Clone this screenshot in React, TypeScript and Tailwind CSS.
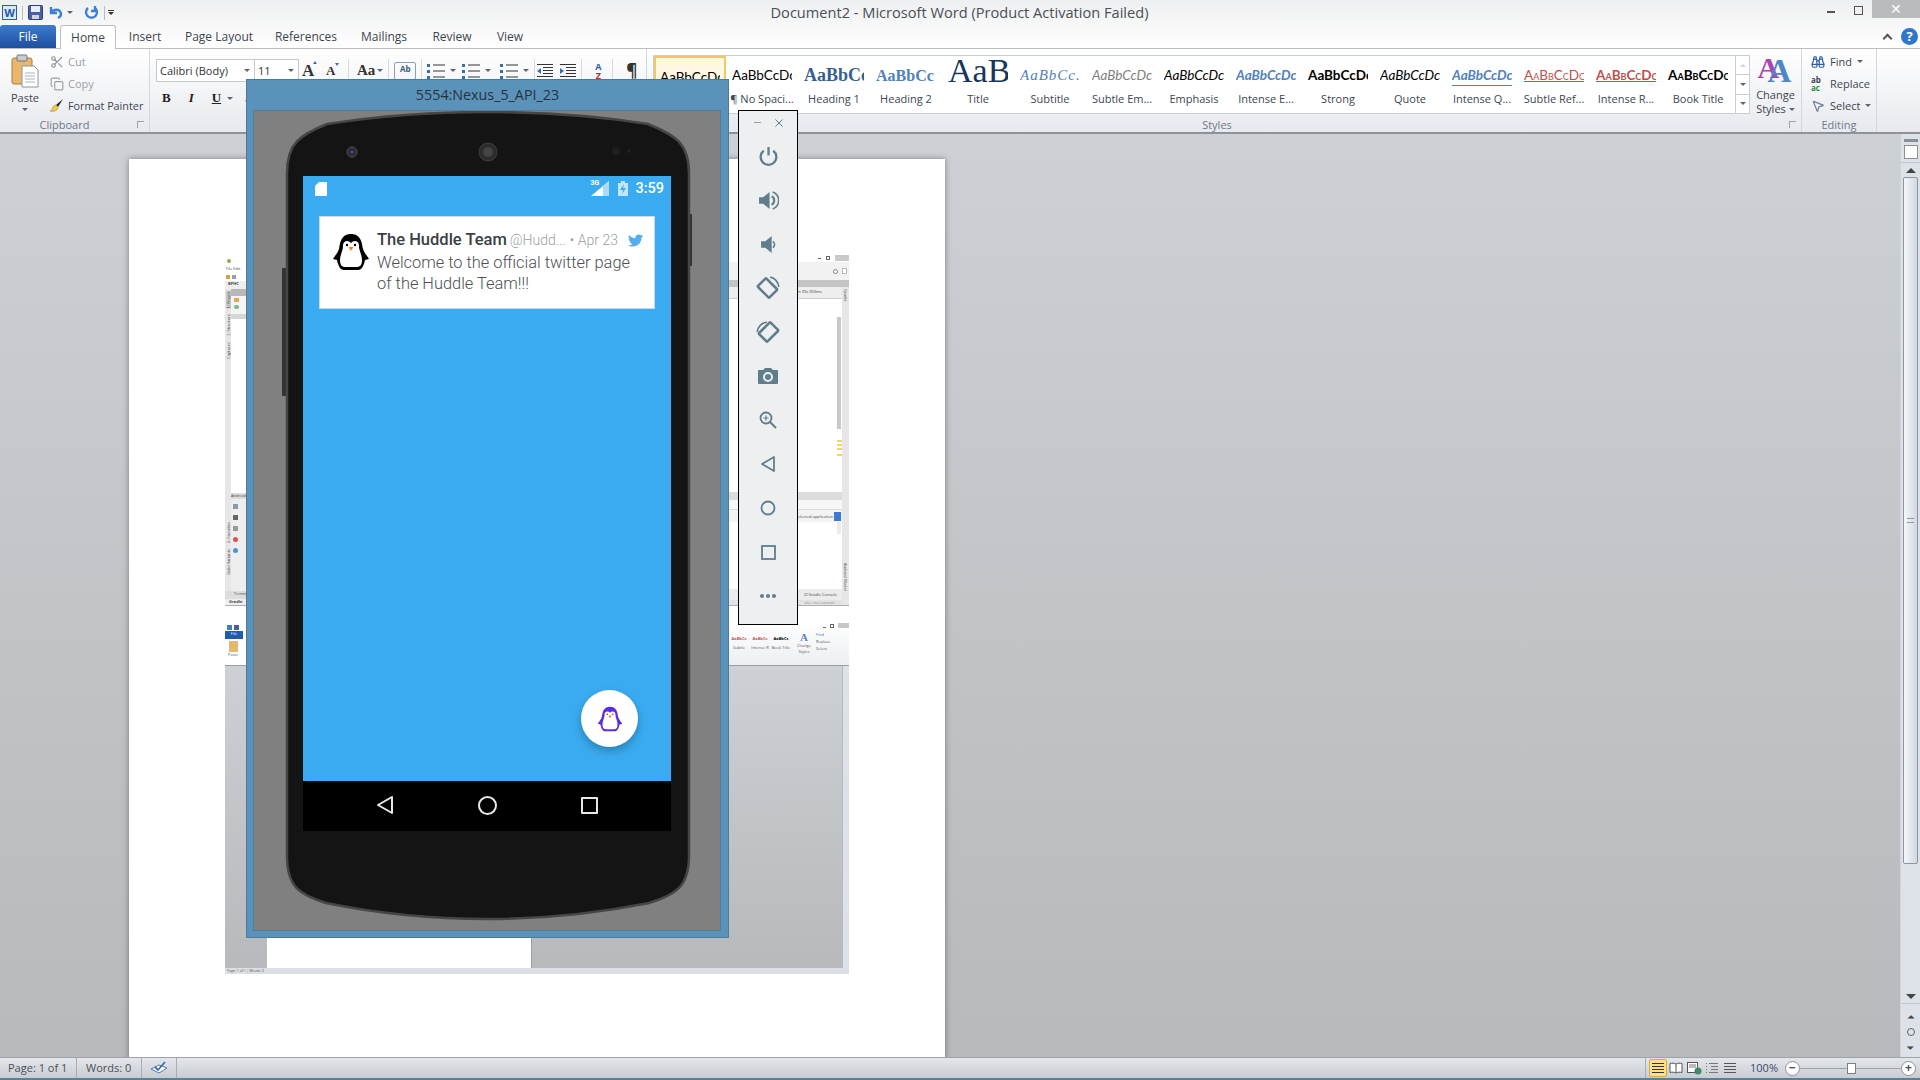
import { Binoculars, Copy, MousePointer2, Scissors } from "lucide-react";
import { FaTwitter } from "react-icons/fa";

const calibri = "font-['Lato',sans-serif]";
const cambria = "font-['Liberation_Serif',serif]";

const tabs = [
  { label: "Insert", width: "w-[58px]" },
  { label: "Page Layout", width: "w-[90px]" },
  { label: "References", width: "w-[84px]" },
  { label: "Mailings", width: "w-[72px]" },
  { label: "Review", width: "w-[64px]" },
  { label: "View", width: "w-[52px]" },
];

const styleItems = [
  { label: "Normal", preview: "AaBbCcDc", cls: `${calibri} text-[13.500px] text-black` },
  { label: "¶ No Spaci...", preview: "AaBbCcDc", cls: `${calibri} text-[13.500px] text-black` },
  { label: "Heading 1", preview: "AaBbCc", cls: `${cambria} text-[18px] font-bold text-[#365f91]` },
  { label: "Heading 2", preview: "AaBbCc", cls: `${cambria} text-[16px] font-bold text-[#4f81bd]` },
  { label: "Title", preview: "AaB", cls: `${cambria} text-[34px] leading-[30px] text-[#17365d] relative -top-[5px]` },
  { label: "Subtitle", preview: "AaBbCc.", cls: `${cambria} text-[15px] italic tracking-[1px] text-[#4f81bd]` },
  { label: "Subtle Em...", preview: "AaBbCcDc", cls: `${calibri} text-[13.500px] italic text-[#808080]` },
  { label: "Emphasis", preview: "AaBbCcDc", cls: `${calibri} text-[13.500px] italic text-black` },
  { label: "Intense E...", preview: "AaBbCcDc", cls: `${calibri} text-[13.500px] italic font-bold text-[#4f81bd]` },
  { label: "Strong", preview: "AaBbCcDc", cls: `${calibri} text-[13.500px] font-bold text-black` },
  { label: "Quote", preview: "AaBbCcDc", cls: `${calibri} text-[13.500px] italic text-black` },
  { label: "Intense Q...", preview: "AaBbCcDc", cls: `${calibri} text-[13.500px] italic font-bold text-[#4f81bd] border-b border-[#4f81bd]` },
  { label: "Subtle Ref...", preview: "AaBbCcDc", cls: `${calibri} text-[13.500px] [font-variant:small-caps] text-[#c0504d] underline` },
  { label: "Intense R...", preview: "AaBbCcDc", cls: `${calibri} text-[13.500px] [font-variant:small-caps] font-bold text-[#c0504d] underline` },
  { label: "Book Title", preview: "AaBbCcDc", cls: `${calibri} text-[13.500px] [font-variant:small-caps] font-bold text-black` },
];

function Caret({ className = "" }: { className?: string }) {
  return <span className={`inline-block w-0 h-0 border-x-[3px] border-x-transparent border-t-[3px] border-t-[#5c6670] ${className}`} />;
}

function Lines({ dots = false }: { dots?: boolean }) {
  return (
    <svg width="18" height="16" viewBox="0 0 18 16">
      {[2, 8, 14].map((y) => (
        <g key={y}>
          {dots && <rect x="0" y={y - 1} width="3" height="3" fill="#3b6ea8" />}
          <rect x="6" y={y - 0.5} width="12" height="1" fill="#333" />
        </g>
      ))}
    </svg>
  );
}

function Indent({ flip = false }: { flip?: boolean }) {
  return (
    <svg width="16" height="16" viewBox="0 0 16 16">
      {[1, 4, 7, 10, 13].map((y) => (
        <rect key={y} x={y > 2 && y < 12 ? 6 : 0} y={y} width={y > 2 && y < 12 ? 10 : 16} height="1" fill="#333" />
      ))}
      <path d={flip ? "M0 5 L4 8 L0 11 Z" : "M4 5 L0 8 L4 11 Z"} fill="#2f6fc0" />
    </svg>
  );
}

function Sep() {
  return <span className="w-px h-[24px] bg-[#d5d9de]" />;
}

function RibbonGroup({
  label,
  width,
  children,
  launcher = true,
  labelClass = "",
}: {
  label: string;
  width: string;
  children: React.ReactNode;
  launcher?: boolean;
  labelClass?: string;
}) {
  return (
    <div className={`${width} h-full flex flex-col border-r border-[#d3d7dc] relative`}>
      <div className="flex-1 min-h-0">{children}</div>
      <div className={`h-[15px] text-center text-[11px] leading-[15px] text-[#6d7a88] ${labelClass}`}>{label}</div>
      {launcher && <span className="absolute right-[5px] bottom-[4px] w-[7px] h-[7px] border-l border-t border-[#9aa2aa]" />}
    </div>
  );
}

function ClipboardGroup() {
  return (
    <RibbonGroup label="Clipboard" width="w-[150px]" labelClass="pr-[20px]">
      <div className="flex h-full">
        <div className="w-[50px] flex flex-col items-center pt-[5px] text-[11px] text-[#3c4650]">
          <svg width="28" height="34" viewBox="0 0 28 34">
            <rect x="1" y="4" width="20" height="26" rx="2" fill="#e8b76c" stroke="#a97f3f" />
            <rect x="6" y="1" width="10" height="6" rx="1" fill="#c8ccd0" stroke="#777" />
            <path d="M11 12h12l4 4v17H11z" fill="#fff" stroke="#8b95a0" />
            <path d="M14 19h10M14 22h10M14 25h10M14 28h10" stroke="#a8b3c0" />
          </svg>
          <span className="leading-[14px] mt-[3px]">Paste</span>
          <Caret className="mt-[3px]" />
        </div>
        <div className="flex flex-col pt-[4px] gap-[5px] text-[11px] leading-[17px]">
          <div className="flex items-center gap-[4px] text-[#9aa0a6]">
            <Scissors size={14} className="text-[#8d9298]" />
            <span>Cut</span>
          </div>
          <div className="flex items-center gap-[4px] text-[#9aa0a6]">
            <Copy size={14} className="text-[#9aa0a6]" />
            <span>Copy</span>
          </div>
          <div className="flex items-center gap-[4px] text-[#3c4650] -ml-[1px]">
            <svg width="15" height="15" viewBox="0 0 15 15">
              <path d="M14 1L7 7l2 2z" fill="#222" />
              <path d="M1 13c3 0 2-6 6-6l2 2c0 4-5 5-8 4z" fill="#f0c94a" stroke="#a88820" strokeWidth="0.6" />
            </svg>
            <span className="text-[10.800px]">Format Painter</span>
          </div>
        </div>
      </div>
    </RibbonGroup>
  );
}

function FontParagraphGroup() {
  return (
    <div className="w-[497px] h-full border-r border-[#d3d7dc] relative">
      <div className="flex items-center h-[23px] mt-[10px] pl-[6px] gap-[5px] text-[#333]">
        <div className="flex h-[23px] border border-[#c5cad0] bg-white text-[11px] leading-[21px] -mr-[2px]">
          <div className="w-[98px] pl-[3px] border-r border-[#c5cad0] flex items-center justify-between pr-[4px]">
            <span>Calibri (Body)</span>
            <Caret />
          </div>
          <div className="w-[43px] pl-[3px] flex items-center justify-between pr-[4px]">
            <span>11</span>
            <Caret />
          </div>
        </div>
        <span className={`${cambria} text-[17px] font-bold w-[18px] relative`}>
          A
          <span className="absolute left-[11px] top-[3px] w-0 h-0 border-x-[2px] border-x-transparent border-b-[3px] border-b-[#3a6ea8]" />
        </span>
        <span className={`${cambria} text-[13px] font-bold w-[17px] ml-[1px] relative`}>
          A
          <span className="absolute left-[9px] top-[2px] w-0 h-0 border-x-[2px] border-x-transparent border-t-[3px] border-t-[#3a6ea8]" />
        </span>
        <Sep />
        <span className={`${cambria} text-[15px] font-bold ml-[3px]`}>Aa</span>
        <Caret className="-ml-[3px]" />
        <Sep />
        <span className="w-[22px] h-[18px] text-[8px] leading-[12px] font-bold text-[#3a5c84] border border-[#8aa0b8] rounded-[2px] text-center">Ab</span>
        <Sep />
        <span><Lines dots /></span>
        <Caret />
        <span className="ml-[1px]"><Lines dots /></span>
        <Caret />
        <span className="ml-[4px]"><Lines dots /></span>
        <Caret />
        <Sep />
        <span className="-ml-[3px]"><Indent /></span>
        <span className="ml-[2px]"><Indent flip /></span>
        <Sep />
        <span className="w-[18px] ml-[2px] text-center text-[9px] font-bold leading-[9px] text-[#2f5fa8]">A<br /><span className="text-[#a83232]">Z</span></span>
        <Sep />
        <span className="ml-[8px] text-[17px] font-bold">¶</span>
      </div>
      <div className="flex items-center h-[20px] mt-[6px] pl-[12px] gap-[18px] text-[13px] font-bold text-[#222]">
        <span className={cambria}>B</span>
        <span className={`${cambria} italic`}>I</span>
        <span className={`${cambria} underline`}>U</span>
        <Caret className="-ml-[12px]" />
        <span className={`${cambria} text-[11px] font-normal -ml-[6px]`}>a</span>
      </div>
    </div>
  );
}

function StylesGroup() {
  return (
    <div className="w-[1155px] h-full flex border-r border-[#d3d7dc] relative">
      <div className="w-[1103px] pl-[6px] pt-[6px]">
        <div className="flex h-[59px] border border-[#c9ced4] bg-white w-[1097px]">
          <div className="flex-1 flex">
            {styleItems.map((s, i) => (
              <div key={s.label} className={`w-[72px] flex flex-col items-center ${i === 0 ? "border-2 border-[#f2c867] bg-[#fff8e0]" : ""}`}>
                <div className="h-[37px] mt-[1px] w-[60px] overflow-hidden flex items-center justify-start whitespace-nowrap">
                  <span className={s.cls}>{s.preview}</span>
                </div>
                <div className="text-[11px] leading-[15px] -mt-[3px] text-[#3c4650] whitespace-nowrap">{s.label}</div>
              </div>
            ))}
          </div>
          <div className="w-[14px] flex flex-col border-l border-[#c9ced4] text-[#555]">
            {[0, 1, 2].map((i) => (
              <div key={i} className="flex-1 flex items-center justify-center border-b border-[#c9ced4] last:border-b-0">
                <Caret className={i === 0 ? "rotate-180 opacity-30" : ""} />
              </div>
            ))}
          </div>
        </div>
      </div>
      <div className="w-[52px] flex flex-col items-center pt-[2px] text-[11px] leading-[14px] text-[#3c4650]">
        <div className={`${cambria} relative w-[36px] h-[37px] font-bold`}>
          <span className="absolute left-0 top-0 text-[30px] leading-[34px] text-[#a847b0]">A</span>
          <span className="absolute left-[10px] top-[3px] text-[33px] leading-[34px] text-[#4f86c8]">A</span>
        </div>
        <span>Change</span>
        <span className="flex items-center gap-[3px]">Styles <Caret /></span>
      </div>
      <div className="absolute left-0 right-0 bottom-0 h-[15px] text-center text-[11px] leading-[15px] text-[#6d7a88] pr-[14px]">Styles</div>
      <span className="absolute right-[5px] bottom-[4px] w-[7px] h-[7px] border-l border-t border-[#9aa2aa]" />
    </div>
  );
}

function EditingGroup() {
  return (
    <RibbonGroup label="Editing" width="w-[75px]" launcher={false}>
      <div className="flex flex-col pl-[9px] pt-[4px] gap-[5px] text-[11px] leading-[17px] text-[#3c4650]">
        <div className="flex items-center gap-[5px]">
          <Binoculars size={14} className="text-[#2f5f9e]" />
          <span>Find</span>
          <Caret />
        </div>
        <div className="flex items-center gap-[4px]">
          <span className="text-[8px] leading-[8px] w-[15px] font-bold">ab<br /><span className="text-[#2f8a3c]">ac</span></span>
          <span>Replace</span>
        </div>
        <div className="flex items-center gap-[5px]">
          <MousePointer2 size={14} className="text-[#6c7f96]" />
          <span>Select</span>
          <Caret />
        </div>
      </div>
    </RibbonGroup>
  );
}

function WordHeader() {
  return (
    <>
      <div className="h-[25px] relative flex items-center">
        <div className="flex items-center pl-[2px] gap-[5px] w-[130px]">
          <span className="w-[15px] h-[15px] border border-[#2c5ea8] bg-[#dbe8f7] text-[11px] font-bold leading-[13px] text-center text-[#1f58a8]">W</span>
          <span className="w-px h-[14px] bg-[#b8bcc0]" />
          <svg width="15" height="15" viewBox="0 0 15 15">
            <rect x="0.5" y="0.5" width="14" height="14" rx="1" fill="#4a5fa5" stroke="#2f3f78" />
            <rect x="3" y="1" width="9" height="6" fill="#e8eef8" />
            <rect x="4" y="10" width="7" height="4" fill="#d0d4dc" />
          </svg>
          <svg width="16" height="15" viewBox="0 0 16 15">
            <path d="M3 2v6h6M3 8c2-4 9-5 10 1 0 2-1 3-3 4" fill="none" stroke="#3f7fcf" strokeWidth="2.4" />
          </svg>
          <Caret className="-ml-[2px]" />
          <svg className="ml-[6px]" width="15" height="15" viewBox="0 0 15 15">
            <path d="M4 3a5.500 5.500 0 1 0 7 0M11 1v5h-4" fill="none" stroke="#3f7fcf" strokeWidth="2.4" />
          </svg>
          <span className="w-px h-[14px] bg-[#b8bcc0]" />
          <span className="flex flex-col items-center gap-[1px] -ml-[2px]">
            <span className="w-[6px] h-px bg-[#333]" />
            <Caret className="border-t-[#333]" />
          </span>
        </div>
        <div className="flex-1 text-center text-[14.600px] text-[#4a4f55] pr-[38px]">Document2 - Microsoft Word (Product Activation Failed)</div>
        <div className="flex items-start h-[25px] self-start">
          <span className="w-[8px] h-[2px] bg-[#555] mt-[11px] mr-[19px]" />
          <span className="w-[9px] h-[9px] border border-[#555] mt-[6px] mr-[9px]" />
          <span className="w-[48px] h-[18px] bg-[#b9bcbf] text-white text-[14px] leading-[18px] text-center">✕</span>
        </div>
      </div>
      <div className="h-[23px] flex items-end relative text-[12px] text-[#3c4650]">
        <div className="w-[56px] h-[23px] ml-0 rounded-t-[3px] bg-gradient-to-b from-[#3f7bcf] to-[#1c4f9f] text-white text-center leading-[23px]">File</div>
        <div className="w-[56px] h-[24px] ml-[4px] -mb-px z-10 rounded-t-[3px] border border-b-0 border-[#b9bec4] bg-white text-center leading-[23px]">Home</div>
        {tabs.map((t) => (
          <div key={t.label} className={`${t.width} h-[23px] leading-[23px] text-center`}>{t.label}</div>
        ))}
        <div className="flex-1 flex justify-end items-center gap-[10px] pr-[2px] self-start h-[23px]">
          <span className="w-[7px] h-[7px] border-l-2 border-t-2 border-[#555] rotate-45 mt-[3px]" />
          <span className="w-[17px] h-[17px] rounded-full bg-[#2f76cf] text-white text-[13px] font-bold leading-[17px] text-center">?</span>
        </div>
      </div>
    </>
  );
}

function IdeLeftStrip() {
  return (
    <div className="w-[21px] h-full flex flex-col text-[4px] leading-[5px] text-[#444] overflow-hidden">
      <div className="h-[11px] flex items-center pl-[2px]"><span className="w-[4px] h-[4px] rounded-full bg-[#7fb53c]" /></div>
      <div className="h-[6px] pl-[1px] whitespace-nowrap">File Edit</div>
      <div className="h-[9px] flex items-center gap-[2px] pl-[1px]">
        <span className="w-[4px] h-[4px] bg-[#d9a24a]" />
        <span className="w-[4px] h-[4px] bg-[#9aa0a6]" />
      </div>
      <div className="h-[8px] pl-[3px] bg-[#eeeeee] font-bold">BPHC</div>
      <div className="flex-1 flex min-h-0">
        <div className="w-[7px] bg-[#e6e6e6] flex flex-col items-center pt-[2px] gap-[6px]">
          <span className="[writing-mode:vertical-rl] rotate-180 bg-[#c8c8c8]">1: Project</span>
          <span className="[writing-mode:vertical-rl] rotate-180">Z: Structure</span>
          <span className="[writing-mode:vertical-rl] rotate-180">Captures</span>
          <span className="flex-1" />
          <span className="[writing-mode:vertical-rl] rotate-180">2: Favorites</span>
          <span className="[writing-mode:vertical-rl] rotate-180 mb-[16px]">Build Variants</span>
        </div>
        <div className="flex-1 flex flex-col">
          <div className="h-[7px] bg-[#b8b8b8]" />
          <div className="h-[18px] bg-[#f4f4f4] flex flex-col gap-[3px] pt-[2px] pl-[3px]">
            <span className="w-[5px] h-[4px] bg-[#e0a85a]" />
            <span className="w-[5px] h-[4px] rounded-full bg-[#6fbf8c]" />
          </div>
          <div className="h-[5px] bg-[#d6d6d6]" />
          <div className="h-[174px] bg-white" />
          <div className="h-[6px] bg-[#dcdcdc] whitespace-nowrap">Android</div>
          <div className="flex-1 bg-[#eeeeee] flex flex-col gap-[6px] pt-[5px] pl-[2px]">
            <span className="w-[5px] h-[5px] bg-[#8a9aaa]" />
            <span className="w-[5px] h-[5px] bg-[#666]" />
            <span className="w-[5px] h-[5px] bg-[#9a9a9a]" />
            <span className="w-[5px] h-[5px] rounded-full bg-[#d9534f]" />
            <span className="w-[5px] h-[5px] rounded-full bg-[#4f90d9]" />
          </div>
        </div>
      </div>
      <div className="h-[8px] bg-[#dddddd] pl-[9px]">Terminal</div>
      <div className="h-[6px] bg-[#eeeeee] font-bold pl-[4px]">Gradle</div>
    </div>
  );
}

function IdeRightStrip() {
  return (
    <div className="w-[120px] h-full flex flex-col text-[4px] leading-[5px] text-[#444] overflow-hidden">
      <div className="h-[7px] flex justify-end items-start bg-white gap-[5px]">
        <span className="w-[3px] h-[1px] bg-[#666] mt-[3px]" />
        <span className="w-[4px] h-[4px] border border-[#666] mt-[1px]" />
        <span className="w-[14px] h-[6px] bg-[#c9c9c9]" />
      </div>
      <div className="h-[18px] bg-[#f2f2f2] flex justify-end items-center gap-[4px] pr-[2px]">
        <span className="w-[5px] h-[5px] rounded-full border border-[#888]" />
        <span className="w-[5px] h-[6px] border border-[#bbb] bg-white" />
      </div>
      <div className="h-[7px] bg-[#c4c4c4]" />
      <div className="flex-1 flex min-h-0">
        <div className="flex-1 flex flex-col min-w-0">
          <div className="h-[12px] bg-[#eeeeee] pl-[68px] leading-[10px] border-b border-[#cfcfcf] whitespace-nowrap">m 39s 953ms</div>
          <div className="h-[193px] bg-white relative flex justify-end pr-[1px]">
            <div className="w-[4px] h-[112px] mt-[18px] bg-[#c8c8c8]" />
            <div className="absolute right-0 top-[141px] w-[5px] h-[2px] bg-[#f1d66a] shadow-[0_4px_0_#f1d66a,0_8px_0_#f1d66a,0_14px_0_#f1d66a]" />
          </div>
          <div className="h-[8px] bg-[#dcdcdc]" />
          <div className="h-[10px] bg-[#f7f7f7] border-b border-[#dddddd]" />
          <div className="h-[12px] bg-[#f3f3f3] flex items-center justify-end gap-[1px] pr-[1px] whitespace-nowrap">
            <span>selected application</span>
            <span className="w-[7px] h-[9px] bg-[#3f77d6]" />
          </div>
          <div className="flex-1 bg-white flex justify-end pr-[1px]">
            <div className="w-[4px] h-[12px] bg-[#ececec]" />
          </div>
          <div className="h-[11px] bg-[#ececec] text-right pr-[5px] leading-[11px] whitespace-nowrap">☑ Gradle Console</div>
          <div className="h-[5px] bg-[#e2e2e2] text-[#888] text-right pr-[6px] whitespace-nowrap">n/a &lt;no context&gt;</div>
        </div>
        <div className="w-[7px] bg-[#e6e6e6] flex flex-col items-center pt-[2px] justify-between pb-[14px]">
          <span className="[writing-mode:vertical-rl]">Gradle</span>
          <span className="[writing-mode:vertical-rl]">Android Model</span>
        </div>
      </div>
    </div>
  );
}

function MiniRibbonRight() {
  return (
    <div className="w-[120px] h-full bg-gradient-to-b from-white to-[#eceef1] text-[4px] leading-[6px] text-[#555] flex flex-col">
      <div className="h-[9px] flex justify-end items-start gap-[4px]">
        <span className="w-[3px] h-px bg-[#666] mt-[4px]" />
        <span className="w-[4px] h-[4px] border border-[#666] mt-[1px]" />
        <span className="w-[11px] h-[5px] bg-[#c4c6c9]" />
      </div>
      <div className="flex-1 flex">
        <div className="w-[62px] flex gap-[1px] pt-[4px] font-bold">
          {["text-[#c0504d]", "text-[#c0504d]", "text-black"].map((c, i) => (
            <div key={i} className="flex-1 overflow-hidden text-center whitespace-nowrap">
              <div className={c}>AaBbCc</div>
              <div className="font-normal text-[#555] mt-[3px]">{["Subtle", "Intense R", "Book Title"][i]}</div>
            </div>
          ))}
        </div>
        <div className="w-[20px] flex flex-col items-center pl-[6px]">
          <span className={`${cambria} text-[11px] leading-[11px] font-bold text-[#5a80c8]`}>A</span>
          <span>Change</span>
          <span>Styles</span>
        </div>
        <div className="flex-1 pl-[5px] flex flex-col gap-[1px]">
          <span className="text-[#3f6fae]">Find</span>
          <span>Replace</span>
          <span>Select</span>
        </div>
      </div>
    </div>
  );
}

function MiniWordShot() {
  return (
    <div className="w-[624px] h-[351px] flex flex-col mt-[17px]">
      <div className="h-[43px] flex justify-between bg-white border-b border-[#9a9ea2]">
        <div className="w-[21px] text-[4px] leading-[5px] text-[#555]">
          <div className="h-[8px] flex items-center gap-[2px] pl-[2px]">
            <span className="w-[5px] h-[5px] bg-[#3f7fcf]" />
            <span className="w-[5px] h-[5px] bg-[#4a5fa5]" />
          </div>
          <div className="h-[8px] w-[18px] bg-[#1f5bb3] text-white text-center">File</div>
          <span className="block w-[9px] h-[11px] bg-[#e8b76c] mx-[4px] mt-[2px]" />
          <div className="pl-[3px]">Paste</div>
        </div>
        <MiniRibbonRight />
      </div>
      <div className="flex-1 flex bg-gradient-to-b from-[#cdd0d4] to-[#b7b9bc] min-h-0">
        <div className="ml-[42px] w-[265px] bg-white border-r border-[#9c9ea0]" />
        <div className="flex-1" />
        <div className="w-[7px] bg-[#dde1e8] border-l border-[#b5b9c0]" />
      </div>
      <div className="h-[6px] bg-[#dcdfe3] text-[3.5px] leading-[6px] text-[#555] pl-[2px] whitespace-nowrap">Page: 1 of 1 | Words: 0</div>
    </div>
  );
}

function Document() {
  return (
    <div className="flex-1 flex pl-[129px] pt-[25px] min-h-0 bg-gradient-to-b from-[#cdd0d4] to-[#b7b9bc] overflow-hidden">
      <div className="w-[816px] h-[920px] bg-white shadow-[0_0_6px_rgba(60,60,60,0.55)] pl-[96px] pt-[96px]">
        <div className="w-[624px] h-[351px] flex justify-between border-b border-[#aab0b6]">
          <IdeLeftStrip />
          <IdeRightStrip />
        </div>
        <MiniWordShot />
      </div>
    </div>
  );
}

function Scrollbar() {
  return (
    <div className="w-[20px] bg-[#dde1e8] flex flex-col items-center text-[#444] border-l border-[#d0d4da]">
      <div className="h-[3px] w-[14px] bg-[#8b8f94] mt-[5px]" />
      <div className="w-[14px] h-[14px] mt-[3px] border border-[#8e9297] bg-white" />
      <div className="h-[15px] w-full flex items-center justify-center border-t border-[#c3c7cd] mt-[3px]">
        <span className="w-0 h-0 border-x-[5px] border-x-transparent border-b-[5px] border-b-[#444]" />
      </div>
      <div className="w-[15px] h-[687px] rounded-[2px] border border-[#8e959d] bg-gradient-to-r from-[#f5f7fa] to-[#d3d8e0] flex items-center justify-center">
        <span className="w-[7px] h-[5px] border-y border-[#8e959d]" />
      </div>
      <div className="flex-1" />
      <span className="w-0 h-0 border-x-[5px] border-x-transparent border-t-[5px] border-t-[#444] mb-[4px]" />
      <div className="w-full border-t border-[#c3c7cd] flex flex-col items-center gap-[6px] pt-[7px] pb-[4px] text-[9px] leading-[11px]">
        <span>⏶</span>
        <span className="w-[8px] h-[8px] rounded-full border border-[#666]" />
        <span>⏷</span>
      </div>
    </div>
  );
}

function StatusBar() {
  return (
    <div className="h-[21px] flex items-center text-[11px] text-[#4a4f55] bg-gradient-to-b from-[#e3e6ea] to-[#c9cdd2] border-t border-[#9ea3a9]">
      <span className="w-[77px] pl-[8px] border-r border-[#a9aeb4] leading-[20px]">Page: 1 of 1</span>
      <span className="w-[65px] pl-[9px] border-r border-[#a9aeb4] leading-[20px]">Words: 0</span>
      <span className="w-[35px] h-[20px] border-r border-[#a9aeb4] flex items-center justify-center">
        <svg width="18" height="14" viewBox="0 0 18 14">
          <path d="M1 8l8-4 8 3-8 5z" fill="#fff" stroke="#4a78b8" />
          <path d="M5 6l3 3 7-8" fill="none" stroke="#3d6fb5" strokeWidth="1.800" />
        </svg>
      </span>
      <div className="flex-1" />
      <div className="w-[275px] h-[20px] flex items-center border-l border-[#a9aeb4]">
        <span className="w-[18px] h-[18px] ml-[3px] rounded-[2px] bg-[#fddf84] border border-[#d9a93c] flex items-center justify-center">
          <svg width="12" height="10" viewBox="0 0 12 10" stroke="#333"><path d="M0 0.500h12M0 3.500h12M0 6.500h12M0 9.500h12" /></svg>
        </span>
        <span className="w-[18px] flex justify-center">
          <svg width="14" height="13" viewBox="0 0 14 13" fill="#fff" stroke="#555"><path d="M7 2C5 1 3 1 1 1.500v9c2-.5 4-.5 6 .5 2-1 4-1 6-.5v-9C11 1 9 1 7 2zM7 2v9" /></svg>
        </span>
        <span className="w-[18px] flex justify-center">
          <svg width="15" height="13" viewBox="0 0 15 13"><rect x="0.500" y="0.500" width="10" height="10" fill="#fff" stroke="#555" /><path d="M2 3h7M2 5h7" stroke="#777" /><circle cx="11" cy="9" r="3.500" fill="#3f8a6a" /></svg>
        </span>
        <span className="w-[18px] flex justify-center">
          <svg width="12" height="10" viewBox="0 0 12 10" stroke="#777"><path d="M3 0.500h9M5 3.500h7M5 6.500h7M3 9.500h9M0 0.500h1M0 3.500h1M0 6.500h1M0 9.500h1" /></svg>
        </span>
        <span className="w-[18px] flex justify-center">
          <svg width="12" height="10" viewBox="0 0 12 10" stroke="#555"><path d="M0 0.500h12M0 3.500h12M0 6.500h12M0 9.500h12" /></svg>
        </span>
        <span className="w-[40px] ml-[5px] text-center text-[#3f4a70]">100%</span>
        <span className="w-[15px] h-[15px] ml-[1px] rounded-full border border-[#8e9297] bg-white text-center font-bold leading-[12px] text-[12px]">−</span>
        <div className="w-[101px] flex items-center relative">
          <span className="w-full h-px bg-[#9ea3a9]" />
          <span className="absolute left-[47px] w-[9px] h-[11px] bg-white border border-[#7b8086]" />
        </div>
        <span className="w-[15px] h-[15px] rounded-full border border-[#8e9297] bg-white text-center font-bold leading-[12px] text-[12px]">+</span>
      </div>
    </div>
  );
}

function Penguin({ outline = false, size = 38 }: { outline?: boolean; size?: number }) {
  const dark = outline ? "#5a2de0" : "#000";
  return (
    <svg width={size} height={size} viewBox="0 0 38 38">
      <path d="M19 1C9 1 8 10 7 16c-1 3-4 7-6 10l4 1c1 5 3 10 7 10h14c4 0 6-5 7-10l4-1c-2-3-5-7-6-10-1-6-2-15-12-15z" fill={dark} />
      <path d="M19 10c-3-4-9-2-8 4 0 3-3 8-3 13 0 5 2 7 5 7h12c3 0 5-2 5-7 0-5-3-10-3-13 1-6-5-8-8-4z" fill="#fff" />
      <circle cx="15" cy="12" r="1.200" fill={dark} />
      <circle cx="23" cy="12" r="1.200" fill={dark} />
      <path d="M16.500 14h5L19 18z" fill="#f58025" />
    </svg>
  );
}

function PhoneShell() {
  return (
    <svg className="absolute inset-0" width="467" height="820" viewBox="0 0 467 820">
      <rect x="28" y="157" width="6" height="128" rx="1" fill="#333" />
      <rect x="435" y="103" width="3" height="52" fill="#333" />
      <path
        d="M33 62C33 32 46 24 73 13 C130 4 180 1 233 1 C286 1 338 4 394 13 C421 24 435 32 435 62 L435 745 C435 776 421 784 395 792 C340 803 290 808 233 808 C176 808 126 803 72 792 C46 784 33 776 33 745Z"
        fill="#141414"
        stroke="#464646"
        strokeWidth="2.500"
      />
      <circle cx="98" cy="41" r="5" fill="#2b2b33" stroke="#555" />
      <circle cx="98" cy="41" r="1.500" fill="#3353b0" />
      <circle cx="234" cy="41" r="9" fill="#2c2c2c" stroke="#3e3e3e" />
      <circle cx="234" cy="41" r="5" fill="#444" />
      <circle cx="362" cy="40" r="4" fill="#1f1f1f" />
      <circle cx="375" cy="40" r="2" fill="#1f1f1f" />
    </svg>
  );
}

function PhoneScreen() {
  return (
    <div className="relative w-[368px] font-['Roboto',sans-serif]">
      <div className="h-[605px] bg-[#3aabf0] flex flex-col px-[16px] relative">
        <div className="h-[25px] -mx-[4px] flex items-center justify-between text-white">
          <svg width="12" height="14" viewBox="0 0 12 14"><path d="M4 0h7a1 1 0 0 1 1 1v12a1 1 0 0 1-1 1H1a1 1 0 0 1-1-1V4z" fill="#fff" /></svg>
          <div className="flex items-center -mr-[5px]">
            <div className="relative w-[19px] h-[15px] mr-[8px]">
              <svg width="19" height="15" viewBox="0 0 19 15"><path d="M18 0v15H0z" fill="#fff" /><path d="M18 0L12 5v10h6z" fill="#a8dcfa" /></svg>
              <span className="absolute -left-[1px] -top-[2px] text-[7px] leading-[9px] font-bold">3G</span>
            </div>
            <svg className="mr-[7px]" width="10" height="15" viewBox="0 0 10 15"><path d="M3 0h4v2h3v13H0V2h3z" fill="#fff" opacity="0.7" /><path d="M6 3L2 9h3l-1 4 4-6H5z" fill="#3aabf0" /></svg>
            <span className="text-[14.500px] font-medium">3:59</span>
          </div>
        </div>
        <div className="mt-[15px] h-[93px] bg-white border border-[#c9d9ec] flex pl-[12px] pt-[13px]">
          <span className="mt-[3px]"><Penguin /></span>
          <div className="ml-[7px] w-[266px]">
            <div className="flex items-center h-[20px] whitespace-nowrap">
              <span className="text-[16.500px] font-medium text-[#3a3f44]">The Huddle Team</span>
              <span className="text-[14px] font-light text-[#9a9ea3] ml-[3px]">@Hudd...</span>
              <span className="text-[14px] font-light text-[#9a9ea3] ml-[4px]">• Apr 23</span>
              <FaTwitter className="ml-[10px] text-[#55acee]" size={17} />
            </div>
            <div className="text-[16.400px] leading-[21px] font-light text-[#4c5055] mt-[2px]">
              Welcome to the official twitter page of the Huddle Team!!!
            </div>
          </div>
        </div>
        <div className="absolute left-[278px] top-[514px] w-[57px] h-[57px] rounded-full bg-white shadow-[0_4px_8px_rgba(0,0,0,0.25)] flex items-center justify-center">
          <Penguin outline size={26} />
        </div>
      </div>
      <div className="h-[50px] bg-black flex justify-center items-center pb-[2px]">
        <div className="w-[102px] flex justify-center">
          <svg width="18" height="20" viewBox="0 0 18 20"><path d="M16 2v16L2 10z" fill="none" stroke="#e8e8e8" strokeWidth="2" strokeLinejoin="round" /></svg>
        </div>
        <div className="w-[102px] flex justify-center">
          <span className="w-[19px] h-[19px] rounded-full border-2 border-[#e8e8e8]" />
        </div>
        <div className="w-[102px] flex justify-center">
          <span className="w-[17px] h-[17px] border-2 border-[#e8e8e8] rounded-[1px]" />
        </div>
      </div>
    </div>
  );
}

function Emulator() {
  return (
    <div className="absolute left-[246px] top-[79px] w-[483px] h-[859px] bg-[#5b92ba] border border-[#4a7a9c] flex flex-col">
      <div className="h-[30px] text-center text-[14.300px] leading-[29px] text-[#26323b]">5554:Nexus_5_API_23</div>
      <div className="relative w-[468px] h-[821px] ml-[6px] bg-[#808080] border border-[#4f7e9f] pl-[49px] pt-[65px]">
        <PhoneShell />
        <PhoneScreen />
      </div>
    </div>
  );
}

const panelIcons = [
  <svg key="power" width="21" height="21" viewBox="0 0 20 20" fill="none" stroke="currentColor" strokeWidth="2.200"><path d="M10 1v8" /><path d="M5.500 4.500a7.500 7.500 0 1 0 9 0" /></svg>,
  <svg key="up" width="21" height="21" viewBox="0 0 20 20"><path d="M1 7h4l6-5v16l-6-5H1z" fill="currentColor" /><path d="M13 6a4.500 4.500 0 0 1 0 8" fill="none" stroke="currentColor" strokeWidth="2" /><path d="M14 2a8.500 8.500 0 0 1 0 16" fill="none" stroke="currentColor" strokeWidth="1.500" /></svg>,
  <svg key="down" width="17" height="17" viewBox="0 0 16 16"><path d="M1 5h4l6-5v16l-6-5H1z" fill="currentColor" /><path d="M12 5a3.500 3.500 0 0 1 0 6" fill="none" stroke="currentColor" strokeWidth="1.500" /></svg>,
  <svg key="rot1" width="26" height="26" viewBox="0 0 24 24" fill="none" stroke="currentColor"><rect x="4" y="6.500" width="15" height="11" rx="1" strokeWidth="2.400" transform="rotate(45 11.500 12)" /><path d="M14 2a10 10 0 0 1 8 9" strokeWidth="1.500" /></svg>,
  <svg key="rot2" width="26" height="26" viewBox="0 0 24 24" fill="none" stroke="currentColor"><rect x="5" y="6.500" width="15" height="11" rx="1" strokeWidth="2.400" transform="rotate(-45 12.500 12)" /><path d="M2 12a10 10 0 0 1 9-9" strokeWidth="1.500" /></svg>,
  <svg key="cam" width="20" height="18" viewBox="0 0 20 18"><path d="M1 3h4l2-2h6l2 2h4a1 1 0 0 1 1 1v12a1 1 0 0 1-1 1H1a1 1 0 0 1-1-1V4a1 1 0 0 1 1-1z" fill="currentColor" /><circle cx="10" cy="10" r="4" fill="none" stroke="#eeeff0" strokeWidth="2" /></svg>,
  <svg key="zoom" width="18" height="18" viewBox="0 0 18 18" fill="none" stroke="currentColor"><circle cx="7" cy="7" r="5.500" strokeWidth="1.800" /><path d="M11 11l6 6" strokeWidth="2" /><path d="M4.500 7h5M7 4.500v5" strokeWidth="1.200" /></svg>,
  <svg key="back" width="14" height="16" viewBox="0 0 14 16" fill="none" stroke="currentColor" strokeWidth="1.800"><path d="M13 1v14L1 8z" strokeLinejoin="round" /></svg>,
  <svg key="home" width="16" height="16" viewBox="0 0 16 16" fill="none" stroke="currentColor" strokeWidth="1.800"><circle cx="8" cy="8" r="6.500" /></svg>,
  <svg key="sq" width="15" height="15" viewBox="0 0 15 15" fill="none" stroke="currentColor" strokeWidth="1.800"><rect x="1" y="1" width="13" height="13" /></svg>,
  <svg key="more" width="16" height="4" viewBox="0 0 16 4" fill="currentColor"><circle cx="2" cy="2" r="2" /><circle cx="8" cy="2" r="2" /><circle cx="14" cy="2" r="2" /></svg>,
];

function ToolPanel() {
  return (
    <div className="absolute left-[738px] top-[110px] w-[60px] h-[515px] bg-[#eeeff0] border border-black flex flex-col text-[#607d8b]">
      <div className="h-[23px] flex items-center justify-center gap-[14px] pl-[1px] shrink-0">
        <span className="w-[7px] h-px bg-[#90a4ae]" />
        <svg width="8" height="8" viewBox="0 0 8 8" stroke="#607d8b"><path d="M0.500 0.500l7 7M7.500 0.500l-7 7" /></svg>
      </div>
      {panelIcons.map((icon) => (
        <div key={icon.key} className="h-[44px] flex items-center justify-center shrink-0">{icon}</div>
      ))}
    </div>
  );
}

export default function App() {
  return (
    <div className="relative w-[1920px] h-[1080px] overflow-hidden flex flex-col font-['Open_Sans',sans-serif] bg-white">
      <div className="bg-gradient-to-b from-[#eeeff0] to-white">
        <WordHeader />
      </div>
      <div className="h-[86px] flex bg-gradient-to-b from-white to-[#e7e9ee] border-t border-[#b9bec4] border-b-2 border-b-[#8d9298] shrink-0">
        <ClipboardGroup />
        <FontParagraphGroup />
        <StylesGroup />
        <EditingGroup />
      </div>
      <div className="flex-1 flex min-h-0">
        <Document />
        <Scrollbar />
      </div>
      <StatusBar />
      <div className="h-[2px] bg-[#5d7f96]" />
      <Emulator />
      <ToolPanel />
    </div>
  );
}
